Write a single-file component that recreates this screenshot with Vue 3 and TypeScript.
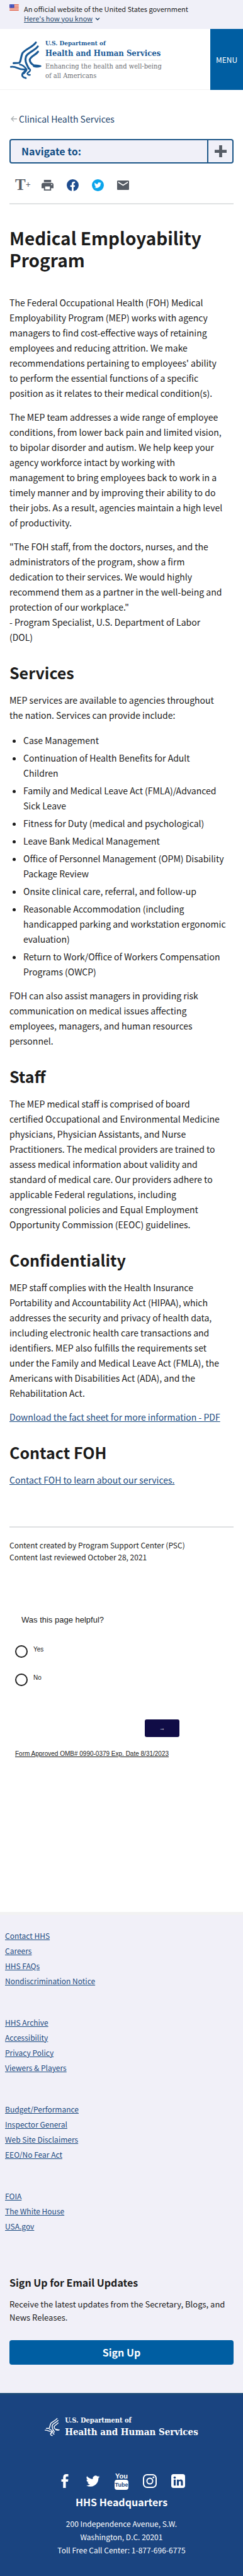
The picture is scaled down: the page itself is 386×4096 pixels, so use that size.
<script setup lang="ts">
const groups: string[][] = [
  ['Contact HHS', 'Careers', 'HHS FAQs', 'Nondiscrimination Notice'],
  ['HHS Archive', 'Accessibility', 'Privacy Policy', 'Viewers & Players'],
  ['Budget/Performance', 'Inspector General', 'Web Site Disclaimers', 'EEO/No Fear Act'],
  ['FOIA', 'The White House', 'USA.gov'],
]
const services: string[] = [
  'Case Management',
  'Continuation of Health Benefits for Adult\nChildren',
  'Family and Medical Leave Act (FMLA)/Advanced Sick Leave',
  'Fitness for Duty (medical and psychological)',
  'Leave Bank Medical Management',
  'Office of Personnel Management (OPM) Disability Package Review',
  'Onsite clinical care, referral, and follow-up',
  'Reasonable Accommodation (including handicapped parking and workstation ergonomic evaluation)',
  'Return to Work/Office of Workers Compensation Programs (OWCP)',
]
const stripes = [0, 2, 4, 6, 8, 10]
</script>

<template>
  <svg class="defs" aria-hidden="true">
    <symbol id="eagle" viewBox="50 205 160 195">
      <g fill="none" stroke="currentColor" stroke-linecap="round" stroke-linejoin="round">
        <path stroke-width="10" d="M181 213C165 236 128 248 114 266C104 282 106 316 94 317L68 318" />
        <path stroke-width="10" d="M191 233C178 254 142 262 131 284C124 304 130 318 145 345" />
        <path stroke-width="10" d="M192 260C180 276 154 284 150 300C150 318 168 330 180 333" />
        <path stroke-width="8" d="M170 330C182 326 192 332 205 333C192 338 182 338 170 334" />
        <path stroke-width="9" d="M54 337C84 332 92 354 122 350C134 350 124 362 114 370C108 382 114 392 130 394" />
        <path stroke-width="8" d="M100 326C116 326 128 342 134 350C136 358 124 366 118 372M145 345C156 350 154 358 144 364C134 370 138 380 151 378" />
      </g>
    </symbol>
    <symbol id="bird" viewBox="0 0 24 24">
      <path d="M23.6 4.9a9.600 9.600 0 0 1-2.800.8 4.900 4.900 0 0 0 2.100-2.700c-.9.600-2 1-3.100 1.200a4.900 4.900 0 0 0-8.400 4.400A13.900 13.900 0 0 1 1.300 3.500a4.900 4.900 0 0 0 1.500 6.500c-.8 0-1.600-.2-2.200-.6v.1a4.900 4.900 0 0 0 3.900 4.800c-.7.2-1.500.2-2.200.1a4.900 4.900 0 0 0 4.600 3.400A9.900 9.900 0 0 1 .1 19.500 13.900 13.900 0 0 0 21.100 7.100c1-.6 1.800-1.400 2.500-2.200z" />
    </symbol>
  </svg>
  <div class="page">
    <div class="banner">
      <svg class="flag" viewBox="0 0 16 11" aria-hidden="true">
        <rect width="16" height="11" fill="#fff" />
        <rect v-for="y in stripes" :key="y" :y="y" width="16" height="1" fill="#db3e1f" />
        <rect width="8" height="6" fill="#1e33b1" />
        <path d="M1 1.500h6M1 3h6M1 4.500h6" stroke="#fff" stroke-width=".7" stroke-dasharray=".7 1" />
      </svg>
      <div>
        <div>An official website of the United States government</div>
        <button class="know" type="button"><span>Here's how you know</span>
          <svg viewBox="0 0 8 6"><path d="M1 1.500l3 3 3-3" fill="none" stroke="currentColor" stroke-width="1.300" /></svg>
        </button>
      </div>
    </div>

    <header class="header">
      <a class="logo" href="#" aria-label="U.S. Department of Health and Human Services">
        <svg class="eagle"><use href="#eagle" /></svg>
        <span class="words">
          <b class="dept">U.S. Department of</b>
          <b class="name">Health and Human Services</b>
          <span class="tag">Enhancing the health and well-being<br />of all Americans</span>
        </span>
      </a>
      <button class="menu" type="button">MENU</button>
    </header>

    <main class="main">
      <a class="back" href="#">
        <svg viewBox="0 0 10 10"><path d="M10 5H1M5 1L1 5l4 4" fill="none" stroke="#a9aeb1" stroke-width="1.300" /></svg>Clinical Health Services</a>
      <button class="nav" type="button">
        <span class="nav-label">Navigate to:</span>
        <span class="nav-plus"><svg viewBox="0 0 20 20"><path d="M10 0v20M0 10h20" stroke="#565c65" stroke-width="5" /></svg></span>
      </button>
      <div class="tools">
        <button type="button" class="grow" aria-label="Increase text size">T<small>+</small></button>
        <button type="button" aria-label="Print">
          <svg viewBox="2 2 20 20"><path fill="#565c65" d="M19 8H5c-1.700 0-3 1.300-3 3v6h4v4h12v-4h4v-6c0-1.700-1.300-3-3-3zm-3 11H8v-5h8v5zm3-7c-.6 0-1-.4-1-1s.4-1 1-1 1 .4 1 1-.4 1-1 1zm-1-9H6v4h12V3z" /></svg>
        </button>
        <button type="button" aria-label="Share on Facebook">
          <svg viewBox="0 0 20 20"><circle cx="10" cy="10" r="10" fill="#1e4c8f" /><path fill="#fff" d="M8.400 20v-7H6v-3h2.400V7.800C8.400 5.200 9.900 4 12 4c.9 0 1.900.2 1.900.2v2.400h-1.100c-1.100 0-1.400.7-1.400 1.400v2h2.500l-.5 3h-2v7z" /></svg>
        </button>
        <button type="button" aria-label="Share on Twitter">
          <svg viewBox="0 0 20 20"><circle cx="10" cy="10" r="10" fill="#0ba5ec" /><use href="#bird" x="4" y="4" width="12" height="12" fill="#fff" /></svg>
        </button>
        <button type="button" aria-label="Email">
          <svg viewBox="2 2 20 20"><path fill="#565c65" d="M20.500 4h-17C2.700 4 2 4.700 2 5.500v13c0 .8.700 1.500 1.500 1.500h17c.8 0 1.500-.7 1.500-1.500v-13c0-.8-.7-1.500-1.500-1.500zm-.5 4l-8 5-8-5V6l8 5 8-5v2z" /></svg>
        </button>
      </div>
      <hr />
      <h1>Medical Employability Program</h1>
      <p>The Federal Occupational Health (FOH) Medical Employability Program (MEP) works with agency managers to find cost-effective ways of retaining employees and reducing attrition. We make recommendations pertaining to employees' ability to perform the essential functions of a specific position as it relates to their medical condition(s).</p>
      <p>The MEP team addresses a wide range of employee conditions, from lower back pain and limited vision, to bipolar disorder and autism. We help keep your agency workforce intact by working with management to bring employees back to work in a timely manner and by improving their ability to do their jobs. As a result, agencies maintain a high level of productivity.</p>
      <p>"The FOH staff, from the doctors, nurses, and the administrators of the program, show a firm dedication to their services. We would highly recommend them as a partner in the well-being and protection of our workplace."<br />- Program Specialist, U.S. Department of Labor (DOL)</p>

      <h2>Services</h2>
      <p>MEP services are available to agencies throughout the nation. Services can provide include:</p>
      <ul class="services">
        <li v-for="s in services" :key="s">{{ s }}</li>
      </ul>
      <p>FOH can also assist managers in providing risk communication on medical issues affecting employees, managers, and human resources personnel.</p>

      <h2>Staff</h2>
      <p>The MEP medical staff is comprised of board certified Occupational and Environmental Medicine physicians, Physician Assistants, and Nurse Practitioners. The medical providers are trained to assess medical information about validity and standard of medical care. Our providers adhere to applicable Federal regulations, including congressional policies and Equal Employment Opportunity Commission (EEOC) guidelines.</p>

      <h2>Confidentiality</h2>
      <p>MEP staff complies with the Health Insurance Portability and Accountability Act (HIPAA), which addresses the security and privacy of health data, including electronic health care transactions and identifiers. MEP also fulfills the requirements set under the Family and Medical Leave Act (FMLA), the Americans with Disabilities Act (ADA), and the Rehabilitation Act.</p>
      <p><a href="#">Download the fact sheet for more information - PDF</a></p>

      <h2>Contact FOH</h2>
      <p><a href="#">Contact FOH to learn about our services.</a></p>
      <hr class="end" />
      <div class="meta">Content created by Program Support Center (PSC)<br />Content last reviewed October 28, 2021</div>
    </main>

    <form class="survey" @submit.prevent>
      <fieldset>
        <legend>Was this page helpful?</legend>
        <label><input type="radio" name="helpful" value="yes" /><span>Yes</span></label>
        <label><input type="radio" name="helpful" value="no" /><span>No</span></label>
      </fieldset>
      <button type="submit" aria-label="Next">→</button>
      <a href="#">Form Approved OMB# 0990-0379 Exp. Date 8/31/2023</a>
    </form>

    <footer>
      <div class="light">
        <nav class="links">
          <ul v-for="(g, i) in groups" :key="i">
            <li v-for="l in g" :key="l"><a href="#">{{ l }}</a></li>
          </ul>
        </nav>
        <section class="signup">
          <h3>Sign Up for Email Updates</h3>
          <p>Receive the latest updates from the Secretary, Blogs, and News Releases.</p>
          <button type="button">Sign Up</button>
        </section>
      </div>
      <div class="dark">
        <a class="flogo" href="#" aria-label="U.S. Department of Health and Human Services">
          <svg><use href="#eagle" /></svg>
          <span class="words"><b class="dept">U.S. Department of</b><b class="name">Health and Human Services</b></span>
        </a>
        <div class="social">
          <a href="#" aria-label="Facebook"><svg viewBox="0 0 24 24"><path d="M9 24V13H6V9h3V6c0-4 2-6 5.500-6H18v4h-2c-1.600 0-2.300.7-2.300 2v3H18l-.6 4h-3.700v11z" /></svg></a>
          <a href="#" aria-label="Twitter"><svg><use href="#bird" /></svg></a>
          <a href="#" aria-label="YouTube"><svg class="tall" viewBox="0 0 22 28"><text class="yt" x="11" y="10" text-anchor="middle">You</text><rect y="12" width="22" height="16" rx="4" /><text class="yt cut" x="11" y="23" text-anchor="middle">Tube</text></svg></a>
          <a href="#" aria-label="Instagram"><svg viewBox="0 0 24 24"><g fill="none" stroke="#fff" stroke-width="2.200"><rect x="1.100" y="1.100" width="21.800" height="21.800" rx="6" /><circle cx="12" cy="12" r="5" /></g><circle cx="18.300" cy="5.700" r="1.500" /></svg></a>
          <a href="#" aria-label="LinkedIn"><svg viewBox="0 0 24 24"><rect width="24" height="24" rx="4" /><g fill="#1a4480"><circle cx="6" cy="6" r="2" /><path d="M4.300 9.500h3.400V20H4.300zM9.800 9.500H13V11c.6-1 1.800-1.800 3.300-1.800 3 0 3.900 2 3.900 4.600V20h-3.400v-5.500c0-1.400-.3-2.500-1.700-2.500s-1.900 1-1.900 2.500V20H9.800z" /></g></svg></a>
        </div>
        <h3>HHS Headquarters</h3>
        <address>200 Independence Avenue, S.W.<br />Washington, D.C. 20201<br />Toll Free Call Center: 1-877-696-6775</address>
      </div>
    </footer>
  </div>
</template>

<style>
body { margin: 0; background: #fff; }
</style>
<style scoped>
.defs { display: none; }
.page { font: 14px/24px "Noto Sans CJK SC", "Noto Sans", sans-serif; color: #1b1b1b; }
.page * { box-sizing: border-box; }
button { font: inherit; color: inherit; border: 0; padding: 0; background: none; cursor: pointer; }
a { color: #1a4a80; }
.banner { display: flex; gap: 8px; height: 46px; padding: 7px 15px 0; background: #f0f0f8; font-size: 11px; line-height: 15px; }
.flag { width: 15px; height: 10px; flex: none; }
.know { display: flex; align-items: center; gap: 4px; color: #1f4468; }
.know span { text-decoration: underline; }
.know svg { width: 8px; height: 6px; }
.header { display: flex; justify-content: space-between; height: 97px; border-bottom: 1px solid #f3f3f3; }
.logo { display: flex; padding: 16px 0 0 16px; text-decoration: none; gap: 6px; color: #1a5a96; }
.eagle { width: 50px; height: 61px; margin-top: 3px; flex: none; }
.words { display: flex; flex-direction: column; font-family: "DejaVu Serif Condensed", "DejaVu Serif", serif; white-space: nowrap; }
.dept { font-size: 10px; line-height: 14px; }
.name { font-size: 13px; line-height: 18px; }
.tag { margin-top: 1px; padding-top: 2px; border-top: 1px solid #e6e6e6; font-size: 11px; line-height: 15px; color: #6b6e73; }
.menu { width: 52px; margin-bottom: -1px; background: #005ea2; color: #fff; font-size: 12px; }
.main { padding: 34px 15px 0; }
.back { display: flex; align-items: center; gap: 3px; padding-left: 2px; color: #24466e; text-decoration: none; }
.back svg { width: 10px; height: 10px; }
.nav { display: flex; width: 100%; height: 39px; margin-top: 20px; border: 2px solid #1c5688; border-radius: 4px; background: #f0f0f8; color: #0f4c84; font-weight: 700; font-size: 16px; text-align: left; }
.nav-label { flex: 1; padding-left: 17px; line-height: 35px; }
.nav-plus { width: 40px; align-self: stretch; border-left: 2px solid #1c5688; display: flex; align-items: center; justify-content: center; }
.nav-plus svg { width: 19px; height: 19px; }
.tools { display: flex; gap: 21px; padding-left: 9px; margin-top: 24px; height: 20px; }
.tools button { width: 19px; height: 20px; display: flex; align-items: center; }
.tools svg { width: 19px; height: 19px; }
.tools .grow { width: 21px; font: 700 25px/20px "Liberation Serif", serif; color: #565c65; }
.grow small { font-size: 14px; }
hr { border: 0; height: 2px; background: #dfe1e2; margin: 19px 0 0; }
h1 { margin: 36px 0 38px; font-size: 28px; line-height: 35px; }
p { margin: 0 0 14px; }
.main p { padding-right: 15px; }
h2 { margin: 29px 0 17px; font-size: 25px; line-height: 30px; }
.services { margin: 16px 0 14px; padding: 0 10px 0 22px; display: grid; gap: 4px; white-space: pre-line; }
.end { margin-top: 62px; }
.meta { margin-top: 18px; font-size: 12px; line-height: 19px; }
.survey { padding: 81px 24px 244px; font-family: "Liberation Sans", Arial, sans-serif; display: flex; flex-direction: column; align-items: flex-start; }
fieldset { border: 0; margin: 0; padding: 0; }
legend { padding: 0 10px; font-size: 13px; line-height: 20px; margin-bottom: 30px; }
.survey label { display: flex; gap: 9px; height: 45px; font-size: 10px; line-height: 14px; }
.survey input { appearance: none; margin: 0; width: 20px; height: 20px; border: 2px solid #222; border-radius: 50%; }
.survey button { width: 55px; height: 28px; margin: 28px 0 20px 206px; border-radius: 3px; background: #100c46; color: #fff; font-size: 9px; line-height: 28px; }
.survey a { font-size: 10px; line-height: 14px; color: #1b1b1b; }
.light { background: #f1f0f8; border-top: 5px solid #f2f2f2; padding: 21px 0 45px; }
.links { padding: 0 8px; display: grid; gap: 42px; font-size: 12px; }
.links ul { margin: 0; padding: 0; list-style: none; }
.links li { line-height: 24px; }
.signup { padding: 65px 15px 0; font-size: 13px; line-height: 21px; }
.signup h3 { margin: 0 0 12px; font-size: 16px; line-height: 24px; }
.signup p { margin: 0 0 26px; }
.signup button { display: block; width: 100%; height: 39px; border-radius: 4px; background: #005ea2; color: #fff; font-size: 16px; font-weight: 700; }
.dark { background: #1a4480; border-top: 3px solid #1c4a78; color: #fff; padding: 33px 0 31px; text-align: center; }
.flogo { display: flex; justify-content: center; gap: 8px; color: #fff; text-decoration: none; text-align: left; }
.flogo svg { width: 24px; height: 30px; margin-top: 3px; }
.flogo .dept { font-size: 11px; line-height: 16px; }
.flogo .name { font-size: 15px; line-height: 20px; }
.social { display: flex; justify-content: center; align-items: center; gap: 23px; margin-top: 53px; height: 30px; }
.social a { display: flex; }
.social svg { width: 22px; height: 22px; fill: #fff; }
.social .tall { height: 28px; }
.yt { font: 700 11px "Liberation Sans", sans-serif; }
.cut { fill: #1a4480; font-size: 9px; }
.dark h3 { margin: 6px 0 12px; font-size: 16px; line-height: 24px; }
address { font-style: normal; font-size: 12px; line-height: 21px; }
</style>
